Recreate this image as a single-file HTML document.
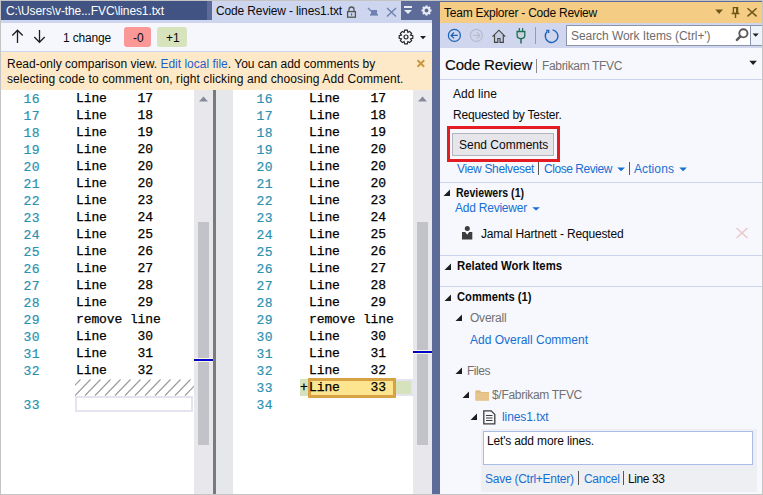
<!DOCTYPE html>
<html><head><meta charset="utf-8">
<style>
*{margin:0;padding:0;box-sizing:border-box}
html,body{width:763px;height:495px;overflow:hidden;background:#fff}
body{position:relative;font-family:"Liberation Sans",sans-serif;font-size:12px;color:#0a0a0a}
.a{position:absolute}
.t{position:absolute;white-space:pre;line-height:1}
.mono{font-family:"Liberation Mono",monospace;font-size:13px;line-height:17px;white-space:pre;color:#000;letter-spacing:-0.1px;-webkit-text-stroke:0.25px #000}
.ln{color:#2b91af;-webkit-text-stroke:0.2px #2b91af;letter-spacing:0.3px}
.lnk{color:#166fd2}
svg{position:absolute;overflow:visible}
.hl{position:absolute;height:1px;background:#ccd5f0}
</style></head><body>
<!-- outer border -->
<div class="a" style="left:0;top:0;width:763px;height:495px;border:1px solid #c4c4c4"></div>

<!-- ===== LEFT DOCUMENT ===== -->
<div class="a" style="left:1px;top:1px;width:431px;height:22px;background:#cdd5ef"></div>
<div class="a" style="left:1px;top:1px;width:206px;height:19px;background:#405382"></div>
<div class="a" style="left:207px;top:1px;width:5px;height:19px;background:#5d6b99"></div>
<div class="t" style="left:6px;top:5px;color:#fff;letter-spacing:-0.11px">C:\Users\v-the...FVC\lines1.txt</div>
<div class="t" style="left:216px;top:5px;color:#0a0a0a;letter-spacing:-0.14px">Code Review - lines1.txt</div>
<!-- lock -->
<svg style="left:346px;top:6px" width="11" height="12" viewBox="0 0 11 12">
  <path d="M3 5.5V3.5a2.5 2.5 0 0 1 5 0V5.5" fill="none" stroke="#555" stroke-width="1.3"/>
  <rect x="1.6" y="5.6" width="7.8" height="5.6" fill="none" stroke="#555" stroke-width="1.3"/>
  <rect x="5" y="7.5" width="1.2" height="2" fill="#555"/>
</svg>
<!-- pin horizontal -->
<svg style="left:367px;top:7px" width="12" height="10" viewBox="0 0 12 10">
  <path d="M1 1L4 4" stroke="#6f83b0" stroke-width="1.3"/>
  <rect x="4" y="3" width="6" height="5" fill="#6f83b0"/>
  <rect x="3" y="7" width="8" height="1.6" fill="#6f83b0"/>
</svg>
<!-- close -->
<svg style="left:386px;top:7px" width="11" height="10" viewBox="0 0 11 10">
  <path d="M1 1L10 9.5M10 1L1 9.5" stroke="#6f83b0" stroke-width="1.4"/>
</svg>
<div class="a" style="left:401px;top:1px;width:39px;height:19px;background:#5d6b99"></div>
<svg style="left:404px;top:5px" width="9" height="10" viewBox="0 0 9 10">
  <rect x="0" y="1" width="8" height="2" fill="#e8ebf6"/>
  <path d="M0 5H8L4 9Z" fill="#e8ebf6"/>
</svg>
<svg style="left:421px;top:5px" width="11" height="11" viewBox="-5.5 -5.5 11 11">
  <g fill="#e8ebf6">
   <rect x="-1.1" y="-5" width="2.2" height="10"/>
   <rect x="-5" y="-1.1" width="10" height="2.2"/>
   <rect x="-1.1" y="-5" width="2.2" height="10" transform="rotate(45)"/>
   <rect x="-1.1" y="-5" width="2.2" height="10" transform="rotate(-45)"/>
  </g>
  <circle r="3" fill="none" stroke="#e8ebf6" stroke-width="1.8"/>
  <circle r="1.9" fill="#5d6b99"/>
</svg>

<!-- toolbar -->
<div class="a" style="left:1px;top:23px;width:431px;height:29px;background:#f6f7fd;border-bottom:1px solid #ccd5f0"></div>
<svg style="left:11px;top:29px" width="14" height="15" viewBox="0 0 14 15">
  <path d="M6.5 1V14M1.3 6.5L6.5 1.2L11.7 6.5" fill="none" stroke="#1e1e1e" stroke-width="1.3"/>
</svg>
<svg style="left:33px;top:29px" width="14" height="15" viewBox="0 0 14 15">
  <path d="M6.5 1V13.5M1.3 8L6.5 13.3L11.7 8" fill="none" stroke="#1e1e1e" stroke-width="1.3"/>
</svg>
<div class="t" style="left:63px;top:32px;letter-spacing:-0.17px">1 change</div>
<div class="a" style="left:124px;top:27px;width:27px;height:20px;background:#fa9797;border-radius:3px"></div>
<div class="t" style="left:133px;top:32px">-0</div>
<div class="a" style="left:157px;top:27px;width:30px;height:20px;background:#d7e3bd;border-radius:3px"></div>
<div class="t" style="left:166px;top:32px">+1</div>
<svg style="left:398px;top:29px" width="16" height="16" viewBox="-8 -8 16 16">
  <g fill="none" stroke="#222" stroke-width="1.2">
  <path d="M-1.3 -6.8H1.3L1.9 -4.6L3.6 -5.6L5.6 -3.6L4.6 -1.9L6.8 -1.3V1.3L4.6 1.9L5.6 3.6L3.6 5.6L1.9 4.6L1.3 6.8H-1.3L-1.9 4.6L-3.6 5.6L-5.6 3.6L-4.6 1.9L-6.8 1.3V-1.3L-4.6 -1.9L-5.6 -3.6L-3.6 -5.6L-1.9 -4.6Z"/>
  <circle r="2"/>
  </g>
</svg>
<svg style="left:420px;top:36px" width="7" height="4" viewBox="0 0 7 4"><path d="M0 0H6L3 3.3Z" fill="#1e1e1e"/></svg>

<!-- info bar -->
<div class="a" style="left:1px;top:52px;width:431px;height:38px;background:#fde9c7"></div>
<div class="t" style="left:7px;top:57px;line-height:15px">Read-only comparison view. <span style="color:#1f5fca">Edit local file</span>. You can add comments by
<span style="letter-spacing:0.1px">selecting code to comment on, right clicking and choosing Add Comment.</span></div>
<svg style="left:416px;top:59px" width="10" height="9" viewBox="0 0 10 9">
  <path d="M1.5 1.2L8.2 7.8M8.2 1.2L1.5 7.8" stroke="#c8963c" stroke-width="1.9"/>
</svg>

<!-- editor left -->
<div class="a" style="left:1px;top:90px;width:193px;height:404px;background:#fff"></div>
<div class="a" style="left:194px;top:90px;width:19px;height:404px;background:#e8e8ec"></div>
<svg style="left:199px;top:96px" width="10" height="6" viewBox="0 0 10 6"><path d="M0 5.5H9L4.5 0.5Z" fill="#868999"/></svg>
<div class="a" style="left:198px;top:222px;width:11px;height:223px;background:#c2c3c9"></div>
<div class="a" style="left:194px;top:358px;width:19px;height:4px;background:#fdfbe0"></div>
<div class="a" style="left:194px;top:359px;width:19px;height:2px;background:#0000cd"></div>
<div class="a" style="left:213px;top:90px;width:3px;height:404px;background:#7a7a7a"></div>
<div class="a" style="left:216px;top:90px;width:17px;height:404px;background:#e6e7eb"></div>
<!-- hatched -->
<svg style="left:75px;top:379px;overflow:hidden" width="119" height="17" viewBox="0 0 119 17"><path d="M-10.0 16.5L5.5 0.5M0.0 16.5L15.5 0.5M10.0 16.5L25.5 0.5M20.0 16.5L35.5 0.5M30.0 16.5L45.5 0.5M40.0 16.5L55.5 0.5M50.0 16.5L65.5 0.5M60.0 16.5L75.5 0.5M70.0 16.5L85.5 0.5M80.0 16.5L95.5 0.5M90.0 16.5L105.5 0.5M100.0 16.5L115.5 0.5M110.0 16.5L125.5 0.5" stroke="#9a9a9a" stroke-width="1.1" fill="none"/></svg>
<div class="a" style="left:75px;top:396px;width:118px;height:16px;border:2px solid #e4e4ee;background:#fff"></div>

<!-- editor right -->
<div class="a" style="left:233px;top:90px;width:180px;height:404px;background:#fff"></div>
<div class="a" style="left:413px;top:90px;width:19px;height:404px;background:#e8e8ec"></div>
<svg style="left:418px;top:96px" width="10" height="6" viewBox="0 0 10 6"><path d="M0 5.5H9L4.5 0.5Z" fill="#868999"/></svg>
<div class="a" style="left:417px;top:222px;width:11px;height:223px;background:#c2c3c9"></div>
<div class="a" style="left:413px;top:350px;width:19px;height:4px;background:#fdfbe0"></div>
<div class="a" style="left:413px;top:351px;width:19px;height:2px;background:#0000cd"></div>
<!-- line 33 highlight -->
<div class="a" style="left:300px;top:379px;width:113px;height:17px;background:#e4e4f0"></div>
<div class="a" style="left:300px;top:379px;width:111px;height:17px;background:#d5e2bc;border-top:2px solid #d5e2bc"></div>
<div class="a" style="left:396px;top:379px;width:17px;height:17px;border:2px solid #e4e4f0;border-left:0;background:#d5e2bc"></div>
<div class="a" style="left:308px;top:378px;width:88px;height:20px;border:3px solid #d6a243;background:#fde58f"></div>
<div class="t mono" style="left:300px;top:379px;line-height:17px">+</div>
<div class="t mono" style="left:309px;top:379px;line-height:17px">Line    33</div>

<!-- separator -->
<div class="a" style="left:432px;top:20px;width:8px;height:474px;background:#5d6b99"></div>
<div class="a" style="left:401px;top:20px;width:31px;height:3px;background:#cdd5ef"></div>

<!-- left code -->
<div class="a mono ln" style="left:23.6px;top:91px">16
17
18
19
20
21
22
23
24
25
26
27
28
29
30
31
32

33</div>
<div class="a mono" style="left:76px;top:90px">Line    17
Line    18
Line    19
Line    20
Line    20
Line    20
Line    23
Line    24
Line    25
Line    26
Line    27
Line    28
Line    29
remove line
Line    30
Line    31
Line    32</div>

<!-- right code -->
<div class="a mono ln" style="left:256.6px;top:91px">16
17
18
19
20
21
22
23
24
25
26
27
28
29
30
31
32
33
34</div>
<div class="a mono" style="left:309px;top:90px">Line    17
Line    18
Line    19
Line    20
Line    20
Line    20
Line    23
Line    24
Line    25
Line    26
Line    27
Line    28
Line    29
remove line
Line    30
Line    31
Line    32</div>

<!-- ===== TEAM EXPLORER ===== -->
<div class="a" style="left:440px;top:1px;width:322px;height:493px;background:#f7f8fd"></div>
<div class="a" style="left:440px;top:1px;width:322px;height:1px;background:#5d6b99"></div>
<div class="a" style="left:440px;top:2px;width:322px;height:21px;background:#f5cc84"></div>
<div class="t" style="left:444px;top:7px;letter-spacing:-0.24px">Team Explorer - Code Review</div>
<svg style="left:715px;top:9px" width="9" height="6" viewBox="0 0 9 6"><path d="M0.3 0.5H7.9L4.1 5Z" fill="#6d5716"/></svg>
<svg style="left:731px;top:7px" width="9" height="12" viewBox="0 0 9 12">
  <path d="M2.4 0.6H6.6V6.4H2.4Z" fill="none" stroke="#6d5716" stroke-width="1.3"/>
  <rect x="5" y="0.6" width="1.8" height="5.8" fill="#6d5716"/>
  <path d="M0.6 6.5H8.4M4.5 6.5V11" stroke="#6d5716" stroke-width="1.4"/>
</svg>
<svg style="left:747px;top:8px" width="11" height="9" viewBox="0 0 11 9">
  <path d="M0.5 0.3L9.6 8.4M9.6 0.3L0.5 8.4" stroke="#6d5716" stroke-width="1.5"/>
</svg>
<div class="a" style="left:440px;top:23px;width:322px;height:25px;background:#cfd6ee"></div>
<!-- toolbar icons -->
<svg style="left:447px;top:28px" width="15" height="15" viewBox="0 0 15 15">
  <circle cx="7.4" cy="7.4" r="6" fill="none" stroke="#1c63b8" stroke-width="1.25"/>
  <path d="M4.2 7.4H10.8M7 4.5L4.1 7.4L7 10.3" fill="none" stroke="#1c63b8" stroke-width="1.2"/>
</svg>
<svg style="left:469px;top:28px" width="15" height="15" viewBox="0 0 15 15">
  <circle cx="7.4" cy="7.4" r="6" fill="none" stroke="#b8bdcc" stroke-width="1.3"/>
  <path d="M3.8 7.4H10.8M7.8 4.3L10.9 7.4L7.8 10.5" fill="none" stroke="#b8bdcc" stroke-width="1.2"/>
</svg>
<svg style="left:491px;top:29px" width="16" height="15" viewBox="0 0 16 15">
  <path d="M3.5 6V13.3H6.8V9.5H9V13.3H12.3V6L7.9 1.6Z" fill="#c5cde0"/>
  <path d="M1.5 7.7L7.9 1.2L14.3 7.7M3.5 6V13.3H6.8V9.5H9V13.3H12.3V6" fill="none" stroke="#444" stroke-width="1.15"/>
</svg>
<svg style="left:515px;top:27px" width="12" height="18" viewBox="0 0 12 18">
  <path d="M4.3 1V4.5M7.6 1V4.5" stroke="#1f6e5a" stroke-width="1.2"/>
  <path d="M2.1 4.5H9.8V8.5C9.8 10.6 8.2 11.6 6 11.6C3.7 11.6 2.1 10.6 2.1 8.5Z" fill="#c8d3dc" stroke="#1f6e5a" stroke-width="1.3"/>
  <path d="M6 11.6V16.5" stroke="#1f6e5a" stroke-width="1.5"/>
</svg>
<div class="a" style="left:535px;top:27px;width:1px;height:17px;background:#8e9bbf"></div>
<svg style="left:543px;top:28px" width="16" height="16" viewBox="0 0 16 16">
  <path d="M4.2 3.6A6.3 6.3 0 1 0 9.6 1.9" fill="none" stroke="#1c63b8" stroke-width="1.4"/>
  <path d="M3.2 2.4H5.6V5" fill="none" stroke="#1c63b8" stroke-width="1.5"/>
</svg>
<div class="a" style="left:566px;top:25px;width:196px;height:21px;background:#fff;border:1px solid #8a94aa;border-right:0"></div>
<div class="a" style="left:750px;top:26px;width:12px;height:19px;background:#eef2fb;border-left:1px solid #8a94aa"></div>
<div class="t" style="left:571px;top:30px;color:#6d6d6d;letter-spacing:-0.06px">Search Work Items (Ctrl+')</div>
<svg style="left:735px;top:27px" width="14" height="15" viewBox="0 0 14 15">
  <circle cx="8.4" cy="6.3" r="4.1" fill="none" stroke="#5a5a5a" stroke-width="1.9"/>
  <path d="M5.4 9.4L1.9 12.9" stroke="#5a5a5a" stroke-width="2.5" stroke-linecap="round"/>
</svg>
<svg style="left:752px;top:33px" width="8" height="5" viewBox="0 0 8 5"><path d="M0.6 0.6H6.8L3.7 3.8Z" fill="#1e1e1e"/></svg>

<div class="t" style="left:445px;top:57px;font-size:15px;letter-spacing:-0.2px;-webkit-text-stroke:0.15px #0a0a0a">Code Review</div>
<div class="a" style="left:536px;top:59px;width:1px;height:14px;background:#8a8a8a"></div>
<div class="t" style="left:542px;top:60px;color:#717171;letter-spacing:-0.34px">Fabrikam TFVC</div>
<svg style="left:749px;top:60px" width="9" height="6" viewBox="0 0 9 6"><path d="M0.3 0.7H7.9L4.1 5Z" fill="#1e1e1e"/></svg>
<div class="hl" style="left:440px;top:79px;width:322px"></div>

<div class="t" style="left:453px;top:88px;letter-spacing:0.08px">Add line</div>
<div class="t" style="left:453px;top:109px;letter-spacing:-0.2px">Requested by Tester.</div>

<div class="a" style="left:447px;top:126px;width:113px;height:36px;border:3px solid #e51b24"></div>
<div class="a" style="left:452px;top:133px;width:102px;height:23px;background:#e6e6ea;border:1px solid #b4b4bc"></div>
<div class="t" style="left:459px;top:139px">Send Comments</div>

<div class="t lnk" style="left:457px;top:163px;letter-spacing:-0.34px">View Shelveset</div>
<div class="a" style="left:538px;top:162px;width:1px;height:13px;background:#555"></div>
<div class="t lnk" style="left:544px;top:163px;letter-spacing:-0.45px">Close Review</div>
<svg style="left:617px;top:167px" width="9" height="5" viewBox="0 0 9 5"><path d="M0.3 0.5H7.9L4.1 4.2Z" fill="#166fd2"/></svg>
<div class="a" style="left:629px;top:162px;width:1px;height:13px;background:#555"></div>
<div class="t lnk" style="left:634px;top:163px;letter-spacing:0.09px">Actions</div>
<svg style="left:679px;top:167px" width="9" height="5" viewBox="0 0 9 5"><path d="M0.3 0.5H7.9L4.1 4.2Z" fill="#166fd2"/></svg>
<div class="hl" style="left:440px;top:182px;width:322px"></div>

<svg style="left:443px;top:189px" width="8" height="8" viewBox="0 0 8 8"><path d="M7 0.5V7H0.5Z" fill="#1e1e1e"/></svg>
<div class="t" style="left:456px;top:187px;font-weight:bold;transform:scaleX(0.879);transform-origin:0 0">Reviewers (1)</div>
<div class="t lnk" style="left:455px;top:202px;letter-spacing:-0.23px">Add Reviewer</div>
<svg style="left:532px;top:207px" width="9" height="5" viewBox="0 0 9 5"><path d="M0.3 0.3H7.9L4.1 3.6Z" fill="#166fd2"/></svg>
<svg style="left:462px;top:226px" width="11" height="14" viewBox="0 0 11 14">
  <circle cx="5.3" cy="2.6" r="2.5" fill="#3d3d3d"/>
  <path d="M0 6H3.2L5.2 8.8L7.2 6H10.3V13.6H0Z" fill="#3d3d3d"/>
</svg>
<div class="t" style="left:481px;top:228px;letter-spacing:-0.16px">Jamal Hartnett - Requested</div>
<svg style="left:735px;top:227px" width="14" height="12" viewBox="0 0 14 12">
  <path d="M1.5 1L12.5 11M12.5 1L1.5 11" stroke="#e9c9c9" stroke-width="1.6"/>
</svg>
<div class="hl" style="left:440px;top:255px;width:322px"></div>
<svg style="left:444px;top:263px" width="8" height="8" viewBox="0 0 8 8"><path d="M7 0.5V7H0.5Z" fill="#1e1e1e"/></svg>
<div class="t" style="left:457px;top:260px;font-weight:bold;transform:scaleX(0.945);transform-origin:0 0">Related Work Items</div>
<div class="hl" style="left:440px;top:286px;width:322px"></div>
<svg style="left:444px;top:294px" width="8" height="8" viewBox="0 0 8 8"><path d="M7 0.5V7H0.5Z" fill="#1e1e1e"/></svg>
<div class="t" style="left:457px;top:291px;font-weight:bold;transform:scaleX(0.931);transform-origin:0 0">Comments (1)</div>
<svg style="left:455px;top:314px" width="8" height="8" viewBox="0 0 8 8"><path d="M7 0.5V7H0.5Z" fill="#1e1e1e"/></svg>
<div class="t" style="left:470px;top:312px;color:#717171;letter-spacing:-0.22px">Overall</div>
<div class="t lnk" style="left:470px;top:334px">Add Overall Comment</div>
<svg style="left:455px;top:367px" width="8" height="8" viewBox="0 0 8 8"><path d="M7 0.5V7H0.5Z" fill="#1e1e1e"/></svg>
<div class="t" style="left:467px;top:365px;color:#717171;letter-spacing:-0.47px">Files</div>
<svg style="left:462px;top:391px" width="8" height="8" viewBox="0 0 8 8"><path d="M7 0.5V7H0.5Z" fill="#1e1e1e"/></svg>
<svg style="left:475px;top:389px" width="15" height="12" viewBox="0 0 15 12">
  <path d="M0.5 1.5H5L6.3 3H14V11.5H0.5Z" fill="#dcb67a"/>
  <path d="M0.5 3.5H14V11.5H0.5Z" fill="#e6c48b"/>
</svg>
<div class="t" style="left:492px;top:389px;color:#717171;letter-spacing:-0.3px">$/Fabrikam TFVC</div>
<svg style="left:470px;top:413px" width="8" height="8" viewBox="0 0 8 8"><path d="M7 0.5V7H0.5Z" fill="#1e1e1e"/></svg>
<svg style="left:483px;top:410px" width="13" height="15" viewBox="0 0 13 15">
  <path d="M0.8 0.8H8.2L11.8 4.4V13.8H0.8Z" fill="#f6f7fc" stroke="#3d3d3d" stroke-width="1.3"/>
  <path d="M3 5.5H9.5M3 8H9.5M3 10.5H9.5" stroke="#3d3d3d" stroke-width="1.1"/>
</svg>
<div class="t lnk" style="left:502px;top:411px;letter-spacing:-0.08px">lines1.txt</div>

<div class="a" style="left:481px;top:429px;width:276px;height:63px;background:#eeeff3"></div>
<div class="a" style="left:483px;top:431px;width:270px;height:34px;background:#fff;border:1px solid #a9bce8"></div>
<div class="t" style="left:487px;top:435px;letter-spacing:-0.16px">Let's add more lines.</div>
<div class="t lnk" style="left:485px;top:473px;letter-spacing:-0.25px">Save (Ctrl+Enter)</div>
<div class="a" style="left:578px;top:471px;width:1px;height:14px;background:#555"></div>
<div class="t lnk" style="left:584px;top:473px;letter-spacing:-0.31px">Cancel</div>
<div class="a" style="left:623px;top:471px;width:1px;height:14px;background:#555"></div>
<div class="t" style="left:628px;top:473px;letter-spacing:-0.41px">Line 33</div>

</body></html>
